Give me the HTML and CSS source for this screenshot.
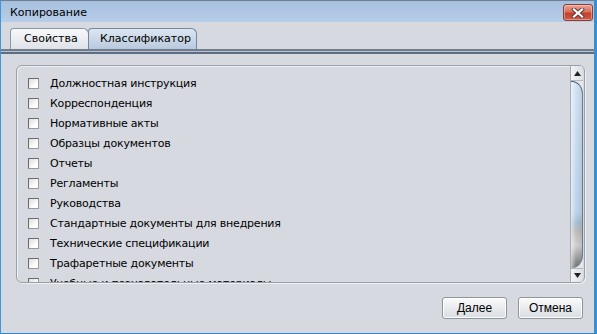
FILE: index.html
```html
<!DOCTYPE html>
<html lang="ru">
<head>
<meta charset="utf-8">
<title>Копирование</title>
<link rel="stylesheet" href="styles.css">
</head>
<body>
<div class="window">
  <div class="titlebar">
    <span class="title">Копирование</span>
    <button class="close" aria-label="Закрыть">
      <svg width="14" height="10" viewBox="0 0 14 10">
        <path d="M3 1.5 L11 8.5 M11 1.5 L3 8.5" stroke="#5a3a36" stroke-width="4" stroke-linecap="square"/>
        <path d="M3 1.5 L11 8.5 M11 1.5 L3 8.5" stroke="#ffffff" stroke-width="2.2" stroke-linecap="square"/>
      </svg>
    </button>
  </div>
  <div class="tabs">
    <div class="tab">Свойства</div>
    <div class="tab active">Классификатор</div>
  </div>
  <div class="tabline"></div>
  <div class="panel">
    <div class="list">
      <label class="item"><span class="box"></span>Должностная инструкция</label>
      <label class="item"><span class="box"></span>Корреспонденция</label>
      <label class="item"><span class="box"></span>Нормативные акты</label>
      <label class="item"><span class="box"></span>Образцы документов</label>
      <label class="item"><span class="box"></span>Отчеты</label>
      <label class="item"><span class="box"></span>Регламенты</label>
      <label class="item"><span class="box"></span>Руководства</label>
      <label class="item"><span class="box"></span>Стандартные документы для внедрения</label>
      <label class="item"><span class="box"></span>Технические спецификации</label>
      <label class="item"><span class="box"></span>Трафаретные документы</label>
      <label class="item"><span class="box"></span>Учебные и познавательные материалы</label>
    </div>
    <div class="scrollbar">
      <div class="sb-btn up"><svg width="7" height="5" viewBox="0 0 7 5"><path d="M3.5 0 L7 5 L0 5 Z" fill="#222"/></svg></div>
      <div class="thumb"></div>
      <div class="sb-btn down"><svg width="7" height="5" viewBox="0 0 7 5"><path d="M0 0 L7 0 L3.5 5 Z" fill="#222"/></svg></div>
    </div>
  </div>
  <div class="footer">
    <button class="btn">Далее</button>
    <button class="btn">Отмена</button>
  </div>
</div>
</body>
</html>
```
FILE: styles.css
```css
* { box-sizing: border-box; }
html, body { margin: 0; padding: 0; }
body {
  width: 597px;
  height: 334px;
  overflow: hidden;
  background: #d6d9e0;
  font-family: "DejaVu Sans", sans-serif;
  font-size: 11px;
  color: #000;
}
.window {
  width: 597px;
  height: 334px;
  background: #d6d9e0;
  border-top: 1px solid #6f7f92;
  border-left: 1px solid #3f97d6;
  border-right: 3px solid #3a8fd0;
  border-bottom: 1px solid #2f86c8;
  display: flex;
  flex-direction: column;
}
.titlebar {
  height: 21px;
  flex: none;
  background: linear-gradient(#a6c0de, #b7cde8);
  display: flex;
  align-items: flex-start;
  justify-content: space-between;
  padding-left: 9px;
  padding-right: 1px;
}
.title {
  margin-top: 5px;
  line-height: 13px;
  color: #000;
}
.close {
  margin-top: 3px;
  width: 30px;
  height: 17px;
  padding: 0;
  border: 1px solid #8a3d33;
  border-radius: 3px;
  background: linear-gradient(#e9a495 0%, #d7705d 45%, #c2402c 55%, #cf5a44 100%);
  box-shadow: inset 0 0 0 1px rgba(255, 220, 210, 0.45);
  display: flex;
  align-items: center;
  justify-content: center;
}
.tabs {
  margin-top: 6px;
  height: 21px;
  flex: none;
  display: flex;
  padding-left: 9px;
  align-items: flex-end;
}
.tab {
  height: 21px;
  line-height: 20px;
  padding: 0 13px;
  border: 1px solid #8d98a7;
  border-bottom: none;
  border-radius: 4px 6px 0 0;
  background: linear-gradient(#f7f8fa, #dfe2e7);
  color: #000;
}
.tab:first-child { width: 79px; }
.tab.active {
  width: 109px;
  padding-left: 11px;
  background: linear-gradient(#dce6f1, #b9cade);
  border-color: #7688a0;
  margin-left: -1px;
}
.tabline {
  flex: none;
  height: 5px;
  border-top: 2px solid #707c8c;
  border-bottom: 2px solid #5e6e82;
  background: #b9c0cb;
}
.panel {
  flex: none;
  margin: 11px 0 0 15px;
  width: 569px;
  height: 218px;
  border: 1px solid #9aa0a9;
  border-radius: 6px;
  box-shadow: inset 1px 1px 0 #eef0f3, 1px 1px 0 #eef0f3;
  display: flex;
  padding-right: 1px;
  overflow: hidden;
}
.list {
  flex: 1;
  padding: 7px 0 0 11px;
  overflow: hidden;
}
.item {
  display: flex;
  align-items: center;
  height: 20px;
  white-space: nowrap;
  letter-spacing: -0.2px;
}
.box {
  width: 11px;
  height: 11px;
  flex: none;
  margin-right: 11px;
  margin-top: 1px;
  border: 1px solid #6a6a6a;
  border-right-color: #9a9a9a;
  border-bottom-color: #9a9a9a;
  background: linear-gradient(135deg, #dcdcdc, #ffffff 70%);
}
.scrollbar {
  width: 13px;
  flex: none;
  display: flex;
  flex-direction: column;
  border-left: 1px solid #a8adb5;
  background: #e4e7eb;
}
.sb-btn {
  flex: none;
  display: flex;
  align-items: center;
  justify-content: center;
  background: linear-gradient(90deg, #f2f3f5, #dcdfe3);
}
.sb-btn.up { height: 15px; border-bottom: 1px solid #b5bac1; }
.sb-btn.down { height: 14px; border-top: 1px solid #b5bac1; }
.thumb {
  flex: 1;
  border-radius: 0 11px 11px 0 / 0 13px 13px 0;
  border-top: 1px solid #50606f;
  border-right: 1px solid #6c7a88;
  background:
    linear-gradient(90deg, rgba(255,255,255,0.55), rgba(255,255,255,0) 45%, rgba(0,0,0,0.08)),
    linear-gradient(#d3e3f3 0%, #bcd4ec 70%, #aabfd4 76%, #bcbcbc 80%, #d0d0d0 88%, #9a9a9a 95%, #6f6f6f 100%);
}
.footer {
  flex: none;
  margin-top: 14px;
  display: flex;
  justify-content: flex-end;
  gap: 11px;
  padding-right: 11px;
}
.btn {
  width: 65px;
  height: 22px;
  padding: 0;
  font-family: "Liberation Sans", Arial, sans-serif;
  font-size: 12px;
  color: #000;
  border: 1px solid #8e949c;
  border-radius: 3px;
  background: linear-gradient(#fbfbfc, #e9ebee 50%, #d9dce1);
  box-shadow: inset 0 0 0 1px #ffffff;
}
```
